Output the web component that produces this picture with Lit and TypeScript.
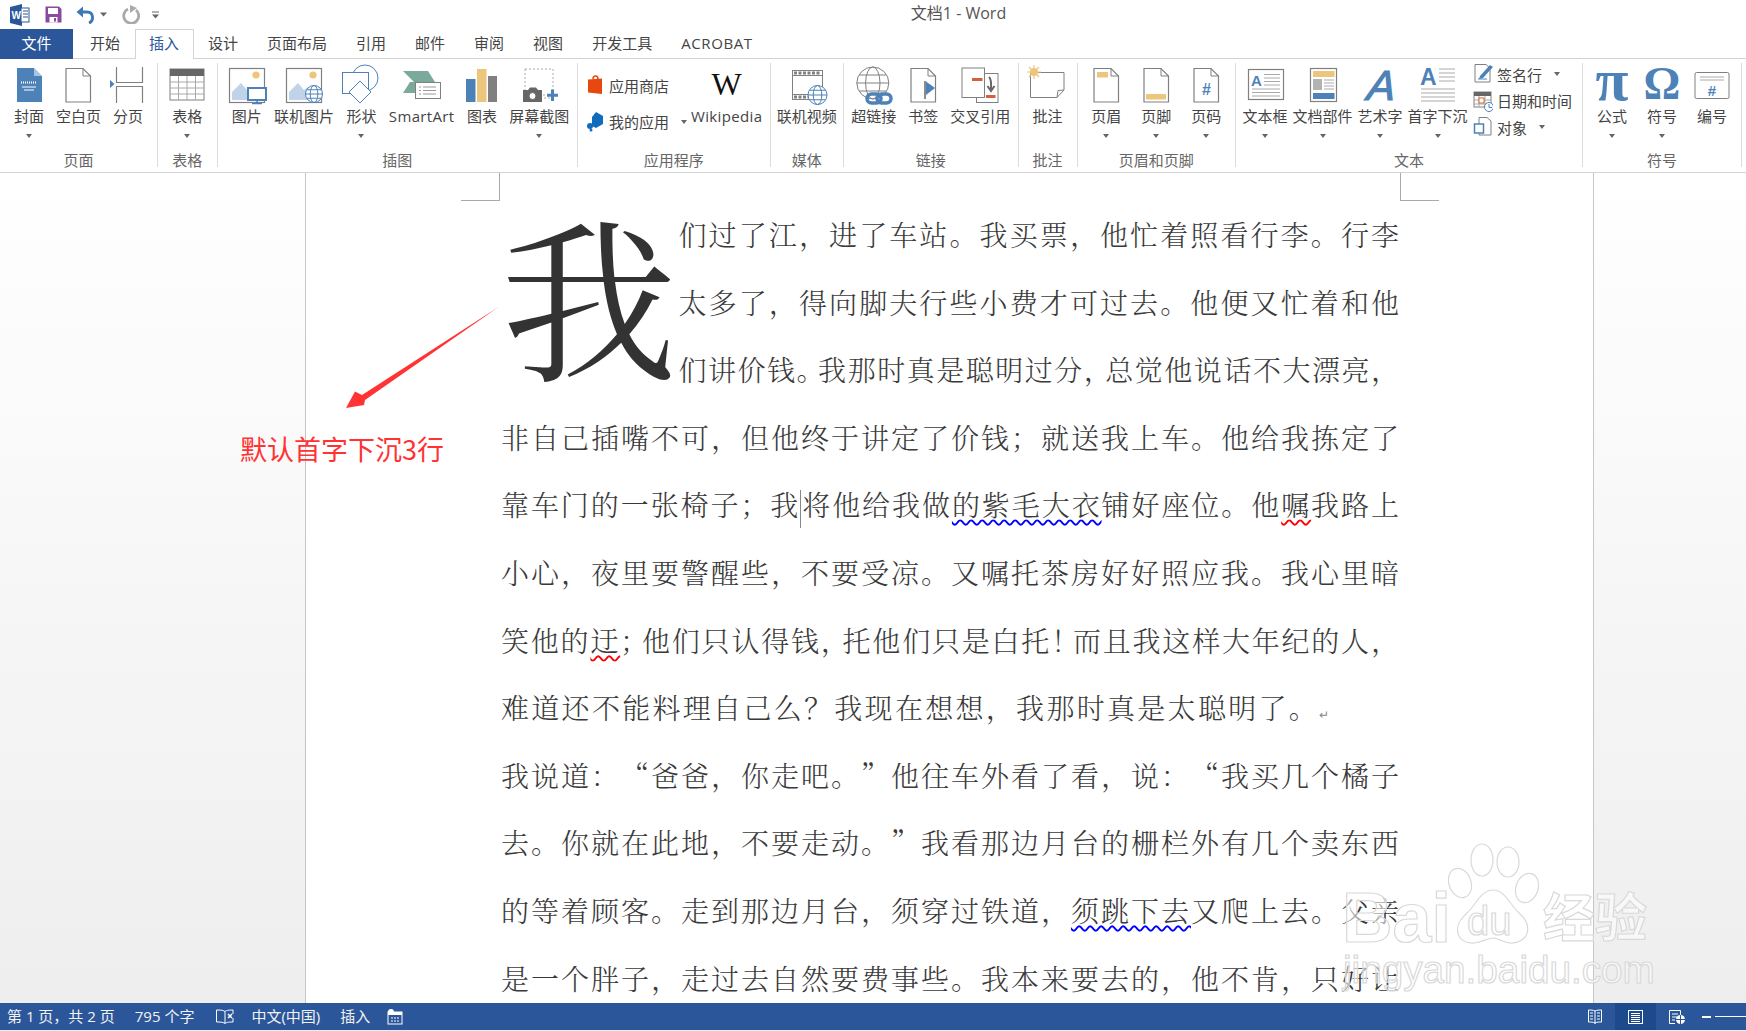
import { LitElement, html, css, svg } from 'lit';
import { customElement } from 'lit/decorators.js';

const BLUE = '#4d82b8';
const GRAY = '#808080';
const YEL = '#ecc67c';

const page = (extra: unknown = '') => svg`
  <path d="M8 3.5H25L32.5 11V37H8Z" fill="#fff" stroke="${GRAY}" stroke-width="1.2"/>
  <path d="M25 3.5V11H32.5" fill="none" stroke="${GRAY}" stroke-width="1"/>
  ${extra}`;

const globe = (cx: number, cy: number, r: number, c = BLUE) => svg`
  <g fill="#fff" stroke="${c}" stroke-width="1">
    <circle cx="${cx}" cy="${cy}" r="${r}"/>
    <ellipse cx="${cx}" cy="${cy}" rx="${r * 0.45}" ry="${r}" fill="none"/>
    <path d="M${cx - r} ${cy}H${cx + r}M${cx - r * 0.85} ${cy - r * 0.5}H${cx + r * 0.85}M${cx - r * 0.85} ${cy + r * 0.5}H${cx + r * 0.85}" fill="none"/>
  </g>`;

const picture = svg`
  <rect x="2.5" y="3.5" width="35" height="34" fill="#fff" stroke="${GRAY}" stroke-width="1.2"/>
  <circle cx="29" cy="10" r="3.6" fill="${YEL}"/>
  <path d="M5 35V27L14 18L20 25L24 22L32 35Z" fill="#c0d3e8"/>`;

const ICONS: Record<string, unknown> = {
  cover: svg`<path d="M8 3H25L33 11V37H8Z" fill="${BLUE}"/><path d="M25 3V11H33Z" fill="#fff"/><path d="M25 3L33 11H25Z" fill="#a9c4de"/>
    <path d="M12 17.5H28" stroke="#fff" stroke-width="2" stroke-dasharray="1 1"/><path d="M13 22H27M15 25H25" stroke="#fff"/>`,
  blank: page(),
  pagebreak: svg`<path d="M8.5 2V17.5H34.5V2M8.5 38V21.5H34.5V38" fill="none" stroke="${GRAY}" stroke-width="1.2"/><path d="M2 15V23L6.5 19Z" fill="${BLUE}"/>`,
  table: svg`<rect x="3" y="4" width="34" height="31" fill="#fff" stroke="${GRAY}"/><rect x="3" y="4" width="34" height="7" fill="#666"/>
    <path d="M3 17H37M3 23H37M3 29H37M11.5 11V35M20 11V35M28.5 11V35" stroke="#aaa"/>`,
  pic: svg`${picture}<rect x="21" y="23" width="18" height="12" fill="#fff" stroke="${BLUE}" stroke-width="2"/><path d="M30 35V38M25 38.5H35" stroke="${BLUE}" stroke-width="1.5"/>`,
  onlinepic: svg`${picture}${globe(30, 29, 8.5)}`,
  shapes: svg`<circle cx="24" cy="13" r="13" fill="none" stroke="${BLUE}"/><rect x="1.5" y="7.5" width="26" height="21" fill="#fff" stroke="${BLUE}"/>
    <path d="M19 16L30 27L19 38L8 27Z" fill="#fff" stroke="${BLUE}"/>`,
  smartart: svg`<path d="M1 6H26L33 17H8L12 17ZM1 28L8 17H33L26 28Z" fill="#7ba99b"/><rect x="13.5" y="17.5" width="25" height="16" fill="#fff" stroke="${GRAY}"/>
    <path d="M21 22H34M21 25.5H34M21 29H34" stroke="#999"/><path d="M17 22H19M17 25.5H19M17 29H19" stroke="#999"/>`,
  chart: svg`<rect x="4" y="14" width="9.5" height="23" fill="${BLUE}"/><rect x="15" y="4" width="9.5" height="33" fill="${YEL}"/><rect x="26" y="11" width="9" height="26" fill="${GRAY}"/>`,
  screenshot: svg`<rect x="6" y="4" width="28" height="29" fill="none" stroke="#aaa" stroke-dasharray="2 2"/>
    <path d="M4 25H9L11 22.5H17L19 25H23V37H4Z" fill="#666"/><circle cx="13.5" cy="31" r="3.5" fill="#fff" stroke="#666"/>
    <path d="M33.5 24.5V36M28 30.2H39" stroke="${BLUE}" stroke-width="3"/><path d="M24 30H27" stroke="#aaa" stroke-dasharray="2 1"/>`,
  video: svg`<rect x="5.5" y="5.5" width="30" height="29" fill="#fff" stroke="${GRAY}"/><path d="M5.5 10.5H35.5M5.5 29.5H35.5" stroke="${GRAY}"/>
    <path d="M7 8H34M7 32H25" stroke="${GRAY}" stroke-width="3" stroke-dasharray="3 1.5"/>${globe(30.5, 30, 9.5)}`,
  link: svg`${globe(18.8, 18, 16, GRAY)}<g fill="none" stroke="${BLUE}" stroke-width="3.5"><rect x="13" y="29" width="14" height="9" rx="4.5"/><rect x="23" y="29" width="14" height="9" rx="4.5"/></g>`,
  bookmark: page(svg`<path d="M22 16V34" stroke="#666" stroke-width="1.5"/><path d="M23 16.5L32 23L23 30Z" fill="${BLUE}"/>`),
  crossref: svg`<rect x="16.5" y="8.5" width="21.5" height="29" fill="#fff" stroke="${GRAY}"/><rect x="2" y="3" width="22.5" height="29.5" fill="#fff" stroke="${GRAY}"/>
    <rect x="12" y="13" width="10.5" height="3" fill="#d5603f"/><rect x="26" y="30" width="9.5" height="3" fill="#d5603f"/>
    <path d="M29 12C32 15 31 20 31 24M27.5 21L31 26L34.5 21" fill="none" stroke="#666" stroke-width="2"/>`,
  comment: svg`<path d="M3.5 7.5H37V25L30 32.5H3.5Z" fill="#fff" stroke="${GRAY}"/><path d="M30 32.5L31 25.5L37 25" fill="none" stroke="${GRAY}"/>
    <circle cx="7" cy="7" r="4" fill="${YEL}"/><path d="M7 0V14M0 7H14M2 2L12 12M12 2L2 12" stroke="${YEL}" stroke-width="1.2"/>`,
  header: page(svg`<rect x="11" y="7" width="11" height="5.5" fill="${YEL}"/>`),
  footer: page(svg`<rect x="10" y="29" width="20" height="5.5" fill="${YEL}"/>`),
  pagenum: page(svg`<text x="20.5" y="30" text-anchor="middle" font-family="Liberation Sans" font-size="16" font-weight="700" fill="${BLUE}">#</text>`),
  textbox: svg`<rect x="3.5" y="4.5" width="35" height="30" fill="#fff" stroke="${GRAY}" stroke-width="1.2"/>
    <text x="6" y="21" font-family="Liberation Sans" font-size="15" font-weight="700" fill="${BLUE}">A</text>
    <path d="M19 9.5H35M19 13H35M19 16.5H35M19 20H35M7 24H35M7 27.5H35M7 31H35" stroke="#aaa"/>`,
  quickpart: svg`<rect x="7.5" y="3.5" width="26" height="33" fill="#fff" stroke="${GRAY}" stroke-width="1.2"/><rect x="10" y="6" width="21.5" height="6" fill="${YEL}"/>
    <rect x="10" y="14" width="9" height="11" fill="#b3b3b3"/><path d="M21 15H31M21 18H31M21 21H31M21 24H31" stroke="#aaa"/><rect x="10" y="28" width="21.5" height="6" fill="${BLUE}"/>`,
  wordart: svg`<text x="21" y="35" text-anchor="middle" transform="skewX(-6) translate(3 0)" font-family="Liberation Sans" font-size="42" font-style="italic" stroke="${BLUE}" stroke-width="1.2" fill="${BLUE}">A</text>`,
  dropcap: svg`<text x="2" y="20" font-family="Liberation Sans" font-size="23" font-weight="700" fill="${BLUE}">A</text>
    <path d="M21 4H37M21 8H37M21 12H37M21 16H37M3 24H37M3 28H37M3 32H37M3 36H37" stroke="#aaa"/>`,
  pi: svg`<text x="20" y="35" text-anchor="middle" font-family="Liberation Serif" font-size="60" font-weight="700" fill="${BLUE}">π</text>`,
  omega: svg`<text x="20" y="34" text-anchor="middle" font-family="Liberation Serif" font-size="46" font-weight="700" fill="${BLUE}">Ω</text>`,
  numbering: svg`<rect x="3" y="7.5" width="34" height="26" rx="1.5" fill="#fff" stroke="${GRAY}"/><path d="M8 12H32M8 15H32" stroke="#aaa"/>
    <text x="20" y="31" text-anchor="middle" font-family="Liberation Sans" font-size="15" font-weight="700" fill="${BLUE}">#</text>`,
};

const SMALL: Record<string, unknown> = {
  sign: svg`<path d="M2 1.5H13L17 5V19H2Z" fill="#fff" stroke="${GRAY}"/><path d="M5 16H14" stroke="${BLUE}"/><path d="M7 13L17 2L20 4L10 15L6 16Z" fill="${BLUE}"/>`,
  date: svg`<rect x="1" y="2" width="17" height="15" fill="#fff" stroke="${GRAY}"/><rect x="1" y="2" width="17" height="4" fill="#666"/>
    <path d="M1 10H18M1 14H18M6 6V17M12 6V17" stroke="#aaa"/><rect x="6" y="8" width="5" height="5" fill="#fff" stroke="#d2691e"/>
    <circle cx="16" cy="17" r="4.5" fill="#fff" stroke="${BLUE}"/><path d="M16 14V17.5H19" fill="none" stroke="${BLUE}"/>`,
  object: svg`<path d="M6 1.5H14L18 5V19H6Z" fill="#fff" stroke="${GRAY}"/><rect x="1.5" y="8" width="9" height="9" fill="#fff" stroke="${BLUE}" stroke-width="1.5"/>`,
  store: svg`<path d="M8 5C8 1 13 1 13 5" fill="none" stroke="#e8470f" stroke-width="1.5"/><path d="M3 5.5L17 4.5V20L3 18.5Z" fill="#e8470f"/>`,
  myapps: svg`<path d="M11 1L18 5V13L11 17L7 15V6Z" fill="#0f6cbd"/><circle cx="5" cy="15" r="3" fill="#0f6cbd"/><circle cx="6" cy="19" r="1.5" fill="#0f6cbd"/>`,
};

interface Btn { label: string; icon: string; caret?: boolean }
interface Group { label: string; width: number; pad: number; lead?: number; items: Btn[] }

const GROUPS: Group[] = [
  { label: '页面', width: 158, pad: 6, items: [
    { label: '封面', icon: 'cover', caret: true }, { label: '空白页', icon: 'blank' }, { label: '分页', icon: 'pagebreak' }] },
  { label: '表格', width: 59.5, pad: 6, items: [{ label: '表格', icon: 'table', caret: true }] },
  { label: '插图', width: 360.5, pad: 6.2, lead: 8, items: [
    { label: '图片', icon: 'pic' }, { label: '联机图片', icon: 'onlinepic' }, { label: '形状', icon: 'shapes', caret: true },
    { label: 'SmartArt', icon: 'smartart' }, { label: '图表', icon: 'chart' }, { label: '屏幕截图', icon: 'screenshot', caret: true }] },
];
const GROUPS2: Group[] = [
  { label: '媒体', width: 73.5, pad: 6, items: [{ label: '联机视频', icon: 'video' }] },
  { label: '链接', width: 174.5, pad: 6, items: [
    { label: '超链接', icon: 'link' }, { label: '书签', icon: 'bookmark' }, { label: '交叉引用', icon: 'crossref' }] },
  { label: '批注', width: 59, pad: 6, items: [{ label: '批注', icon: 'comment' }] },
  { label: '页眉和页脚', width: 158.5, pad: 10, items: [
    { label: '页眉', icon: 'header', caret: true }, { label: '页脚', icon: 'footer', caret: true }, { label: '页码', icon: 'pagenum', caret: true }] },
];
const TEXT_ITEMS: Btn[] = [
  { label: '文本框', icon: 'textbox', caret: true }, { label: '文档部件', icon: 'quickpart', caret: true },
  { label: '艺术字', icon: 'wordart', caret: true }, { label: '首字下沉', icon: 'dropcap', caret: true },
];
const SYMBOLS: Group = { label: '符号', width: 159, pad: 10, items: [
  { label: '公式', icon: 'pi', caret: true }, { label: '符号', icon: 'omega', caret: true }, { label: '编号', icon: 'numbering' }] };

const TABS = ['开始', '插入', '设计', '页面布局', '引用', '邮件', '审阅', '视图', '开发工具', 'ACROBAT'];

@customElement('app-root')
export class AppRoot extends LitElement {
  static styles = css`
    :host {
      display: flex;
      flex-direction: column;
      position: relative;
      width: 1746px;
      height: 1031px;
      overflow: hidden;
      background: #fff;
      color: #444;
      font-family: 'Open Sans', 'Noto Sans CJK SC', sans-serif;
      font-size: 15px;
    }
    .title { flex: none; height: 29px; display: flex; align-items: center; position: relative; }
    .qa { display: flex; align-items: center; padding-left: 9px; }
    .qa svg { display: block; }
    .qa .save { margin-left: 14px; }
    .qa .undo { margin-left: 14px; }
    .qa .drop-arrow { margin-left: 4px; }
    .qa .redo { margin-left: 15px; }
    .qa .more { margin-left: 12px; }
    .doc-title { position: absolute; left: 0; top: 0; width: 1746px; padding-left: 171px; box-sizing: border-box; line-height: 27px; text-align: center; font-size: 16px; color: #555; }
    .tabs { flex: none; height: 30px; display: flex; border-bottom: 1px solid #d4d4d4; box-sizing: border-box; }
    .file { width: 73px; height: 30px; background: #2b579a; color: #fff; text-align: center; line-height: 29px; margin-right: 2.5px; }
    .tab { height: 30px; padding: 0 13.5px; line-height: 26px; border: 1px solid transparent; border-bottom: 0; box-sizing: border-box; white-space: nowrap; }
    .tab.on { background: #fff; border-color: #d4d4d4; color: #2b579a; }
    .tab.latin { letter-spacing: 0.6px; }
    .ribbon { flex: none; height: 114px; box-sizing: border-box; border-bottom: 1px solid #d4d4d4; display: flex; align-items: flex-start; padding-top: 4px; }
    .group { flex: none; height: 104px; box-sizing: border-box; border-right: 1px solid #dcdcdc; display: flex; flex-direction: column; }
    .body { flex: none; height: 87px; display: flex; justify-content: center; padding-top: 2px; box-sizing: border-box; }
    .body.start { justify-content: flex-start; padding-left: 4px; }
    .glabel { flex: none; height: 20px; line-height: 20px; text-align: center; color: #666; white-space: nowrap; }
    .btn { display: flex; flex-direction: column; align-items: center; }
    .btn > svg { display: block; margin: 0 -20px; flex: none; overflow: visible; }
    .btn .lab { height: 20px; line-height: 20px; margin-top: 1px; white-space: nowrap; }
    .lab.latin { letter-spacing: 0.35px; }
    .caret { width: 0; height: 0; border: 3.5px solid transparent; border-top: 4px solid #666; border-bottom: 0; margin-top: 8px; }
    .list { display: flex; flex-direction: column; }
    .list.text { margin: -4px 0 0 3px; }
    .list.store { margin-top: 7px; gap: 10px; }
    .row { height: 26.5px; display: flex; align-items: center; gap: 4px; white-space: nowrap; }
    .row svg { flex: none; }
    .row .caret { margin: 0 0 0 8px; }
    .body.apps { padding-left: 7px; }
    .wiki { margin-left: 4px; }
    .wmark { height: 40px; line-height: 38px; font-family: 'Liberation Serif', serif; font-size: 32px; color: #111; }
    .doc { flex: 1; min-height: 0; display: flex; overflow: hidden; }
    .canvas { flex: none; background: linear-gradient(#fff, #eee); }
    .canvas.l { width: 305px; }
    .canvas.r { flex: 1; }
    .page { flex: none; width: 1289px; box-sizing: border-box; position: relative; border: solid #c6c6c6; border-width: 0 1px; padding: 28px 194px 0 195px; color: #3a3a3a; font-family: 'Noto Serif CJK SC', 'Noto Sans CJK SC', sans-serif; font-size: 28px; font-weight: 300; text-spacing-trim: space-all; }
    .crop { position: absolute; top: 0; width: 38px; height: 27px; border-bottom: 1px solid #aaa; }
    .crop.a { left: 155px; border-right: 1px solid #aaa; }
    .crop.b { right: 154px; border-left: 1px solid #aaa; }
    .dropcap { float: left; width: 177.5px; height: 200px; font-size: 176px; line-height: 182px; color: #333; font-weight: 400; }
    .line { line-height: 67.6px; height: 67.6px; text-align: justify; text-align-last: justify; }
    .line.free { text-align-last: left; letter-spacing: 2.3px; }
    .t { letter-spacing: -8px; }
    .gram { text-decoration: underline wavy #0000ff 1.5px; text-underline-offset: 3px; }
    .spell { text-decoration: underline wavy #ff0000 1.5px; text-underline-offset: 3px; }
    .cursor { display: inline-block; width: 0; height: 38px; vertical-align: middle; border-left: 1px solid #888; margin-right: -1px; }
    .mark { font-size: 12px; color: #888; letter-spacing: 0; font-family: 'DejaVu Sans', sans-serif; }
    .status { flex: none; height: 27px; background: #2b579a; color: #f2f2f2; display: flex; align-items: center; font-size: 15px; white-space: nowrap; }
    .status .seg { margin-left: 20px; padding-bottom: 2px; display: flex; align-items: center; }
    .status .seg:first-child { margin-left: 7px; }
    .status .seg.book { margin-left: 22px; padding-bottom: 0; }
    .status .seg.lang { margin-left: 17px; }
    .status .seg.macro { margin-left: 17px; padding-bottom: 0; }
    .status .spacer { flex: 1; }
    .status svg { display: block; }
    .view { height: 27px; width: 41px; display: flex; align-items: center; justify-content: center; }
    .view.on { background: #1c4a8c; }
    .zoom { display: flex; align-items: center; gap: 4px; margin-left: 5px; width: 44px; overflow: hidden; flex: none; }
    .zoom i { display: block; width: 9px; height: 2px; background: #fff; flex: none; }
    .zoom b { display: block; width: 40px; height: 1px; background: #fff; flex: none; }
    .strip { flex: none; height: 1px; background: #ececec; }
    .overlay { position: absolute; left: 0; top: 0; pointer-events: none; }
    .note { position: absolute; left: 240px; top: 431px; font-family: 'Noto Sans CJK SC', sans-serif; font-size: 27px; line-height: 36px; color: #f33; white-space: nowrap; }
  `;

  private _btn(b: Btn, pad: number) {
    return html`<div class="btn" style="padding: 0 ${pad}px">
      <svg width="40" height="40" viewBox="0 0 40 40">${ICONS[b.icon]}</svg>
      <div class="lab ${/[a-z]/i.test(b.label) ? 'latin' : ''}">${b.label}</div>
      ${b.caret ? html`<div class="caret"></div>` : ''}
    </div>`;
  }

  private _group(g: Group) {
    const body = g.lead
      ? html`<div class="body start" style="padding-left: ${g.lead}px">${g.items.map((b) => this._btn(b, g.pad))}</div>`
      : html`<div class="body">${g.items.map((b) => this._btn(b, g.pad))}</div>`;
    return html`<div class="group" style="width: ${g.width}px">
      ${body}
      <div class="glabel">${g.label}</div>
    </div>`;
  }

  private _small(icon: string) {
    return html`<svg width="20" height="22" viewBox="0 0 20 22">${SMALL[icon]}</svg>`;
  }

  private _ribbon() {
    return html`<div class="ribbon">
      ${GROUPS.map((g) => this._group(g))}
      <div class="group" style="width: 192.5px">
        <div class="body start apps">
          <div class="list store">
            <div class="row">${this._small('store')}应用商店</div>
            <div class="row">${this._small('myapps')}我的应用<div class="caret"></div></div>
          </div>
          <div class="btn wiki">
            <div class="wmark">W</div>
            <div class="lab latin">Wikipedia</div>
          </div>
        </div>
        <div class="glabel">应用程序</div>
      </div>
      ${GROUPS2.map((g) => this._group(g))}
      <div class="group" style="width: 347px">
        <div class="body start">
          ${TEXT_ITEMS.map((b) => this._btn(b, 2.5))}
          <div class="list text">
            <div class="row">${this._small('sign')}签名行<div class="caret"></div></div>
            <div class="row">${this._small('date')}日期和时间</div>
            <div class="row">${this._small('object')}对象<div class="caret"></div></div>
          </div>
        </div>
        <div class="glabel">文本</div>
      </div>
      ${this._group(SYMBOLS)}
    </div>`;
  }

  private _watermark() {
    return svg`<g font-family="Liberation Sans, sans-serif" font-weight="700" fill="rgba(255,255,255,.55)" stroke="#d9d9d9" stroke-width="1.2">
      <ellipse cx="1460" cy="883" rx="11" ry="15" transform="rotate(-20 1460 883)"/>
      <ellipse cx="1482" cy="860" rx="11" ry="16"/>
      <ellipse cx="1508" cy="862" rx="11" ry="15"/>
      <ellipse cx="1527" cy="888" rx="11" ry="15" transform="rotate(20 1527 888)"/>
      <path d="M1493 890C1505 890 1510 905 1520 914C1534 926 1528 944 1510 943C1502 942 1498 938 1493 938C1488 938 1482 942 1474 943C1456 944 1452 926 1466 914C1476 905 1481 890 1493 890Z"/>
      <text x="1342" y="942" font-size="70">Bai</text>
      <text x="1467" y="935" font-size="40" font-weight="400">du</text>
      <text x="1543" y="937" font-size="52" font-family="Noto Sans CJK SC, sans-serif">经验</text>
      <text x="1343" y="983" font-size="38.7" font-weight="400">jingyan.baidu.com</text>
    </g>`;
  }

  render() {
    return html`
      <div class="title">
        <div class="qa">
          <svg width="22" height="22" viewBox="0 0 22 22"><path d="M1 3L13 0V22L1 19Z" fill="#2b579a"/><rect x="12" y="4" width="8" height="14" fill="#fff" stroke="#2b579a"/><path d="M14 7H19M14 10H19M14 13H19" stroke="#2b579a"/><text x="2.5" y="15" font-family="Liberation Sans" font-size="10" font-weight="700" fill="#fff">W</text></svg>
          <svg class="save" width="17" height="17" viewBox="0 0 17 17"><path d="M0.5 0.5H14L16.5 3V16.5H0.5Z" fill="#8a4b9e"/><rect x="3" y="2" width="10" height="6" fill="#fff"/><rect x="4.5" y="11" width="8" height="5.5" fill="#fff"/><rect x="9" y="12" width="2" height="3.5" fill="#8a4b9e"/></svg>
          <svg class="undo" width="20" height="18" viewBox="0 0 20 18"><path d="M6 6H11C18 6 18 15 13 17" fill="none" stroke="#3c78b4" stroke-width="2.8"/><path d="M7 0.5V11.5L0.5 6Z" fill="#3c78b4"/></svg>
          <svg class="drop-arrow" width="7" height="5" viewBox="0 0 7 5"><path d="M0 0.5H7L3.5 4.5Z" fill="#666"/></svg>
          <svg class="redo" width="18" height="19" viewBox="0 0 18 19"><path d="M6 4A7.5 7.5 0 1 0 14 5" fill="none" stroke="#aaa" stroke-width="2.8"/><path d="M8 0V8L15 3Z" fill="#aaa"/></svg>
          <svg class="more" width="7" height="8" viewBox="0 0 7 8"><path d="M0 1H7" stroke="#666"/><path d="M0 3.5H7L3.5 7.5Z" fill="#666"/></svg>
        </div>
        <div class="doc-title">文档1 - Word</div>
      </div>
      <div class="tabs">
        <div class="file">文件</div>
        ${TABS.map((t, i) => html`<div class="tab ${i === 1 ? 'on' : ''} ${t === 'ACROBAT' ? 'latin' : ''}">${t}</div>`)}
      </div>
      ${this._ribbon()}
      <div class="doc">
        <div class="canvas l"></div>
        <div class="page">
          <div class="crop a"></div>
          <div class="crop b"></div>
          <div class="dropcap">我</div>
          <div class="line">们过了江，进了车站。我买票，他忙着照看行李。行李</div>
          <div class="line">太多了，得向脚夫行些小费才可过去。他便又忙着和他</div>
          <div class="line">们讲价钱<span class="t">。</span>我那时真是聪明过分<span class="t">，</span>总觉他说话不大漂亮，</div>
          <div class="line">非自己插嘴不可，但他终于讲定了价钱；就送我上车。他给我拣定了</div>
          <div class="line">靠车门的一张椅子；我<span class="cursor"></span>将他给我做<span class="gram">的紫毛大衣</span>铺好座位。他<span class="spell">嘱</span>我路上</div>
          <div class="line">小心，夜里要警醒些，不要受凉。又嘱托茶房好好照应我。我心里暗</div>
          <div class="line">笑他的<span class="spell">迂</span><span class="t">；</span>他们只认得钱<span class="t">，</span>托他们只是白托<span class="t">！</span>而且我这样大年纪的人，</div>
          <div class="line free">难道还不能料理自己么？我现在想想，我那时真是太聪明了。<span class="mark">↵</span></div>
          <div class="line">我说道：“爸爸，你走吧。”他往车外看了看，说：“我买几个橘子</div>
          <div class="line">去。你就在此地，不要走动。”我看那边月台的栅栏外有几个卖东西</div>
          <div class="line">的等着顾客。走到那边月台，须穿过铁道，<span class="gram">须跳下去</span>又爬上去。父亲</div>
          <div class="line">是一个胖子，走过去自然要费事些。我本来要去的，他不肯，只好让</div>
        </div>
        <div class="canvas r"></div>
      </div>
      <div class="status">
        <div class="seg">第 1 页，共 2 页</div>
        <div class="seg">795 个字</div>
        <div class="seg book"><svg width="18" height="15" viewBox="0 0 18 15"><path d="M9 2.5C7 1 4 1 0.5 1V13C4 13 7 13 9 14.5C10 13.5 12 13 17 13V9M9 2.5C10 1.5 12 1 17 1V5M9 2.5V14.5" fill="none" stroke="#fff"/><path d="M12 5L16 9M16 5L12 9" stroke="#fff" stroke-width="1.5"/></svg></div>
        <div class="seg lang">中文(中国)</div>
        <div class="seg">插入</div>
        <div class="seg macro"><svg width="16" height="16" viewBox="0 0 16 16"><rect x="1" y="3" width="14" height="12" fill="none" stroke="#fff"/><rect x="1" y="3" width="14" height="3" fill="#fff"/><circle cx="4" cy="3" r="3" fill="#fff"/><path d="M4 9H12M4 12H12" stroke="#fff" stroke-dasharray="2 1"/></svg></div>
        <div class="spacer"></div>
        <div class="view"><svg width="14" height="15" viewBox="0 0 14 15"><path d="M7 2C5 1 3 1 0.5 1V13C3 13 5 13 7 14C9 13 11 13 13.5 13V1C11 1 9 1 7 2ZM7 2V15M2 4H5M2 7H5M2 10H5M9 4H12M9 7H12M9 10H12" fill="none" stroke="#fff"/></svg></div>
        <div class="view on"><svg width="15" height="14" viewBox="0 0 15 14"><rect x="0.5" y="0.5" width="14" height="13" fill="none" stroke="#fff"/><path d="M3 3.5H12M3 5.5H12M3 7.5H12M3 9.5H12M3 11.5H12" stroke="#fff"/></svg></div>
        <div class="view"><svg width="16" height="14" viewBox="0 0 16 14"><path d="M0.5 0.5H11.5V6M6 13.5H0.5V0.5M3 4H9M3 7H8M3 10H6" fill="none" stroke="#fff"/><circle cx="11.5" cy="9.5" r="4.5" fill="#fff"/><path d="M7 9.5H16M11.5 5V14" stroke="#2b579a"/></svg></div>
        <div class="zoom"><i></i><b></b></div>
      </div>
      <div class="strip"></div>
      <svg class="overlay" width="1746" height="1031" viewBox="0 0 1746 1031">
        <defs><linearGradient id="tail" x1="500" y1="306" x2="346" y2="408" gradientUnits="userSpaceOnUse"><stop offset="0" stop-color="#f33" stop-opacity=".6"/><stop offset=".08" stop-color="#f33"/></linearGradient></defs>
        <path d="M500 306L362 395L355 391.5L346 408L364 405L365 400Z" fill="url(#tail)"/>
        ${this._watermark()}
      </svg>
      <div class="note">默认首字下沉3行</div>
    `;
  }
}
